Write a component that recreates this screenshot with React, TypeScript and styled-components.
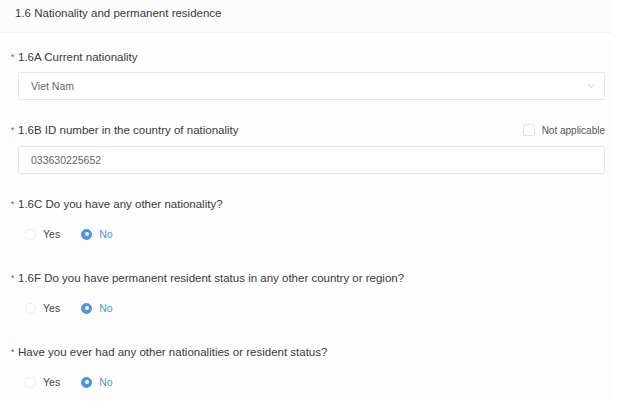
import React from 'react'
import styled, { createGlobalStyle } from 'styled-components'

const GlobalStyle = createGlobalStyle`
    html, body {
        margin: 0;
        padding: 0;
        background: #ffffff;
        font-family: Arial, "Liberation Sans", sans-serif;
    }
`

const Page = styled.div`
    width: 612px;
    display: flex;
    flex-direction: column;
`

const SectionHeader = styled.div`
    height: 32px;
    line-height: 27px;
    padding: 0 15px;
    background: #fcfcfc;
    border-bottom: 1px solid #f3f3f3;
    font-size: 11.5px;
    color: #3a3a3a;
`

const SectionBody = styled.div`
    margin-top: 7px;
    padding: 9px 7px 10px 18px;
    background: #fdfdfd;
    display: flex;
    flex-direction: column;
`

const Field = styled.div<{ gapAfter?: number }>`
    display: flex;
    flex-direction: column;
    margin-bottom: ${p => p.gapAfter ?? 0}px;
`

const LabelRow = styled.div<{ gapAfter: number }>`
    display: flex;
    align-items: center;
    justify-content: space-between;
    height: 16px;
    margin-bottom: ${p => p.gapAfter}px;
`

const Label = styled.div`
    font-size: 11.5px;
    color: #3a3a3a;
    line-height: 16px;
    white-space: nowrap;
`

const Required = styled.span`
    display: inline-block;
    width: 7px;
    margin-left: -7px;
    color: #f5222d;
    font-size: 9px;
    line-height: 16px;
    vertical-align: 1px;
`

const Box = styled.div`
    height: 28px;
    box-sizing: border-box;
    border: 1px solid #e8e8e8;
    border-radius: 2px;
    background: #fff;
    display: flex;
    align-items: center;
    justify-content: space-between;
    padding: 0 8px 0 12px;
    font-size: 10.5px;
    color: #666;
`

const Chevron = () => (
    <svg width="9" height="6" viewBox="0 0 9 6">
        <path d="M1 1l3.5 3.5L8 1" fill="none" stroke="#cfcfcf" strokeWidth="1" />
    </svg>
)

const CheckLabel = styled.label`
    display: flex;
    align-items: center;
    gap: 7px;
    font-size: 10px;
    color: #555;
`

const CheckBox = styled.span`
    width: 10px;
    height: 10px;
    border: 1px solid #e0e0e0;
    border-radius: 2px;
    background: #fff;
`

const RadioGroup = styled.div`
    display: flex;
    align-items: center;
    height: 16px;
    padding-left: 7px;
    gap: 21px;
`

const RadioOption = styled.div<{ checked?: boolean }>`
    display: flex;
    align-items: center;
    gap: 7px;
    font-size: 10.5px;
    color: ${p => (p.checked ? '#4a94e8' : '#444')};
`

const RadioDot = styled.span<{ checked?: boolean }>`
    width: 11px;
    height: 11px;
    box-sizing: border-box;
    border-radius: 50%;
    border: 1px solid ${p => (p.checked ? '#4a94e8' : '#ececec')};
    background: ${p => (p.checked ? '#4a94e8' : '#fff')};
    display: flex;
    align-items: center;
    justify-content: center;

    &::after {
        content: '';
        width: 4px;
        height: 4px;
        border-radius: 50%;
        background: ${p => (p.checked ? '#fff' : 'transparent')};
    }
`

const YesNo = ({ value }: { value: 'yes' | 'no' }) => (
    <RadioGroup>
        <RadioOption checked={value === 'yes'}>
            <RadioDot checked={value === 'yes'} />
            Yes
        </RadioOption>
        <RadioOption checked={value === 'no'}>
            <RadioDot checked={value === 'no'} />
            No
        </RadioOption>
    </RadioGroup>
)

const questions = [
    '1.6C Do you have any other nationality?',
    '1.6F Do you have permanent resident status in any other country or region?',
    'Have you ever had any other nationalities or resident status?',
]

export default function App() {
    return <>
        <GlobalStyle />
        <Page>
            <SectionHeader>1.6 Nationality and permanent residence</SectionHeader>
            <SectionBody>
                <Field gapAfter={22}>
                    <LabelRow gapAfter={7}>
                        <Label><Required>*</Required>1.6A Current nationality</Label>
                    </LabelRow>
                    <Box>
                        Viet Nam
                        <Chevron />
                    </Box>
                </Field>

                <Field gapAfter={22}>
                    <LabelRow gapAfter={8}>
                        <Label><Required>*</Required>1.6B ID number in the country of nationality</Label>
                        <CheckLabel>
                            <CheckBox />
                            Not applicable
                        </CheckLabel>
                    </LabelRow>
                    <Box>033630225652</Box>
                </Field>

                {questions.map((q, i) => (
                    <Field key={q} gapAfter={i < questions.length - 1 ? 28 : 0}>
                        <LabelRow gapAfter={14}>
                            <Label><Required>*</Required>{q}</Label>
                        </LabelRow>
                        <YesNo value="no" />
                    </Field>
                ))}
            </SectionBody>
        </Page>
    </>
}
